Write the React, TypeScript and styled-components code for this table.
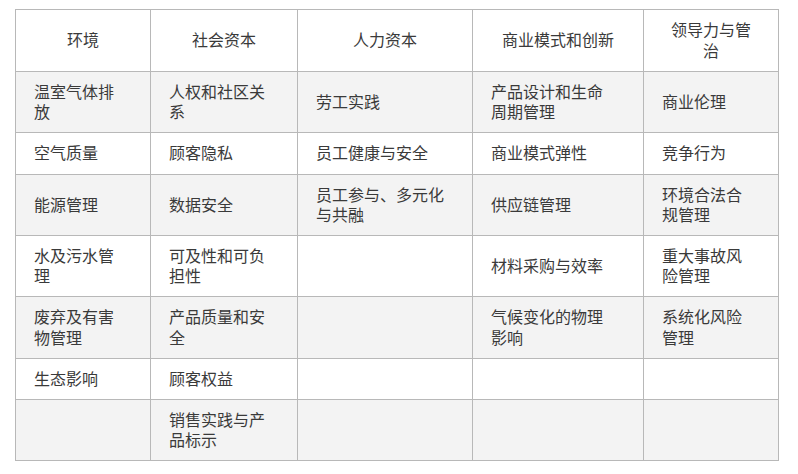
import styled, { createGlobalStyle } from "styled-components"

const GlobalStyle = createGlobalStyle`
  body {
    margin: 0;
    background: #ffffff;
    font-family: "Noto Sans CJK SC", "Noto Sans", sans-serif;
    color: #3a3a3a;
  }
`

const Page = styled.div`
  padding: 9px 20px 0 15px;
`

const Table = styled.table`
  border-collapse: collapse;
  table-layout: fixed;
  width: 763px;
  font-size: 16px;
  line-height: 20.2px;
`

const HeadCell = styled.th`
  border: 1px solid #b8b8b8;
  padding: 9px 22px 11px;
  font-weight: 400;
  text-align: center;
  vertical-align: middle;
  height: 41px;
`

const Row = styled.tr<{ $striped: boolean }>`
  background: ${p => (p.$striped ? "#f3f3f3" : "#ffffff")};
`

const Cell = styled.td`
  border: 1px solid #b8b8b8;
  padding: 9px 26px 11px 18px;
  text-align: left;
  vertical-align: middle;
`

const columns = [
  { title: "环境", width: 135 },
  { title: "社会资本", width: 147 },
  { title: "人力资本", width: 175 },
  { title: "商业模式和创新", width: 171 },
  { title: "领导力与管治", width: 135 },
]

const rows: string[][] = [
  ["温室气体排放", "人权和社区关系", "劳工实践", "产品设计和生命周期管理", "商业伦理"],
  ["空气质量", "顾客隐私", "员工健康与安全", "商业模式弹性", "竞争行为"],
  ["能源管理", "数据安全", "员工参与、多元化与共融", "供应链管理", "环境合法合规管理"],
  ["水及污水管理", "可及性和可负担性", "", "材料采购与效率", "重大事故风险管理"],
  ["废弃及有害物管理", "产品质量和安全", "", "气候变化的物理影响", "系统化风险管理"],
  ["生态影响", "顾客权益", "", "", ""],
  ["", "销售实践与产品标示", "", "", ""],
]

const App = () => {
  return (
    <Page>
      <GlobalStyle />
      <Table>
        <colgroup>
          {columns.map(col => (
            <col key={col.title} style={{ width: col.width }} />
          ))}
        </colgroup>
        <thead>
          <tr>
            {columns.map(col => (
              <HeadCell key={col.title}>{col.title}</HeadCell>
            ))}
          </tr>
        </thead>
        <tbody>
          {rows.map((row, i) => (
            <Row key={i} $striped={i % 2 === 0}>
              {row.map((text, j) => (
                <Cell key={j}>{text || "\u00a0"}</Cell>
              ))}
            </Row>
          ))}
        </tbody>
      </Table>
    </Page>
  )
}

export default App
